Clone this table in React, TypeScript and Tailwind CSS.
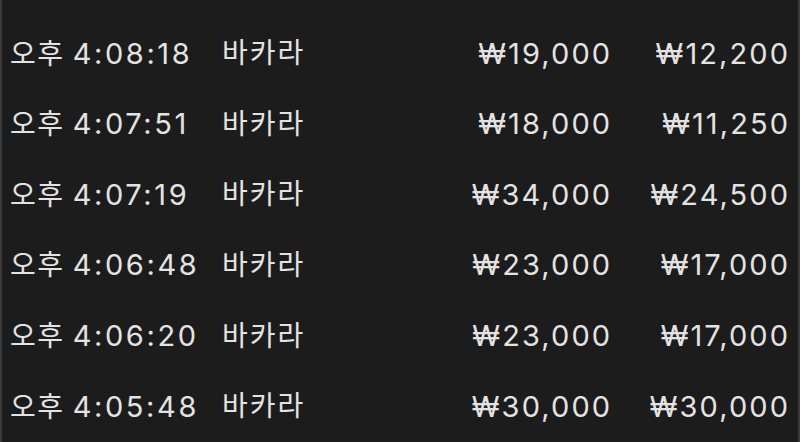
import React from "react";

const rows = [
  { t: "4:08:18", a: "₩19,000", b: "₩12,200" },
  { t: "4:07:51", a: "₩18,000", b: "₩11,250" },
  { t: "4:07:19", a: "₩34,000", b: "₩24,500" },
  { t: "4:06:48", a: "₩23,000", b: "₩17,000" },
  { t: "4:06:20", a: "₩23,000", b: "₩17,000" },
  { t: "4:05:48", a: "₩30,000", b: "₩30,000" },
];

export default function App() {
  return (
    <div
      className="w-[800px] h-[442px] overflow-hidden bg-[#1c1c1c] border-l-2 border-r-2 border-[#3a3a3a] text-[#e3e3e3] text-[29px] font-normal"
      style={{ fontFamily: 'Inter, "Noto Sans CJK KR", sans-serif' }}
    >
      <div className="flex flex-col pt-[18px]">
        {rows.map((r, i) => (
          <div key={i} className="flex items-center h-[70.6px] pl-[8px] pr-[10px]">
            <div className="w-[212px] whitespace-nowrap">
              <span className="tracking-[1.5px] text-[28px]">오후</span>{" "}
              <span className="tracking-[2.6px]">{r.t}</span>
            </div>
            <div className="flex-1 whitespace-nowrap tracking-[2px] text-[28px]">바카라</div>
            <div className="w-[160px] text-right whitespace-nowrap tracking-[2.1px] -mr-[2.1px]">{r.a}</div>
            <div className="w-[180px] text-right whitespace-nowrap tracking-[2.1px] -mr-[2.1px]">{r.b}</div>
          </div>
        ))}
      </div>
    </div>
  );
}
